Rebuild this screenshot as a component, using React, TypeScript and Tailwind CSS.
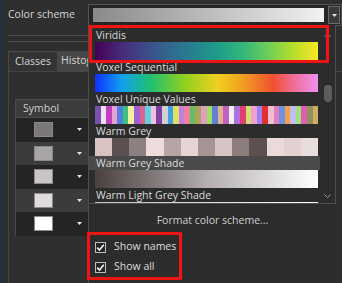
const font = { fontFamily: '"Open Sans", "Noto Sans", sans-serif' };

const voxelStripes = [
  "#7a4fb0", "#f0e0f0", "#c040c0", "#e8a0d0", "#5080e0", "#40c080", "#f0f0a0", "#a060d0",
  "#e06090", "#60d0e0", "#f0c0e0", "#8040a0", "#d0d0d0", "#40a0e0", "#e0e060", "#c080e0",
  "#f080a0", "#60c060", "#b0a060", "#e0a0c0", "#a0e060", "#6080d0", "#e0b090", "#c060c0",
  "#f0f0f0", "#b070e0", "#e04070", "#d0e070", "#f0a0d0", "#a080f0", "#e03030", "#f0c0d0",
  "#e080c0", "#7090e0", "#f0a050", "#c0c0f0", "#a0e080", "#e060b0", "#909060", "#d0b060",
];

const warmGrey = [
  "#d8c2c2", "#5c5050", "#8c8080", "#ecdcdc", "#b4a4a4", "#e4d4d4", "#a49494",
  "#d4c4c4", "#8c7c7c", "#5c5050", "#eadada", "#e4d0d0", "#e8dcdc",
];

const rows = [
  { swatch: "#7d7878", dark: true },
  { swatch: "#a9a4a4", dark: false },
  { swatch: "#c9c5c5", dark: true },
  { swatch: "#e0dcdc", dark: false },
  { swatch: "#ffffff", dark: true },
];

function Caret({ className = "" }: { className?: string }) {
  return (
    <svg width="5" height="3" viewBox="0 0 5 3" className={className}>
      <path d="M0 0 L5 0 L2.5 3 Z" fill="#e6e6e6" />
    </svg>
  );
}

function Check() {
  return (
    <div className="w-[11px] h-[11px] border border-[#bdbdbd] bg-[#262626] flex items-center justify-center">
      <svg width="9" height="9" viewBox="0 0 9 9">
        <path d="M1.2 4.6 L3.5 7 L7.8 1.8" stroke="#f2f2f2" strokeWidth="1.6" fill="none" />
      </svg>
    </div>
  );
}

function SchemeItem({ label, children, active }: { label: string; children: React.ReactNode; active?: boolean }) {
  return (
    <div className="flex flex-col">
      <div className={`h-[14px] pl-[7px] text-[10.5px] leading-[14px] text-[#dcdcdc] w-[231px] ${active ? "bg-[#4a4a4a]" : ""}`}>
        {label}
      </div>
      <div className="h-[18px] ml-[6px] w-[223px] flex overflow-hidden">{children}</div>
    </div>
  );
}

export default function App() {
  return (
    <div className="relative w-[342px] h-[283px] bg-[#2f2f2f] overflow-hidden border-l-[3px] border-[#24303c]" style={font}>
      {/* Top row */}
      <div className="flex items-center h-[28px] pt-[2px]">
        <div className="w-[85px] pl-[5px] text-[10.5px] text-[#d6d6d6]">Color scheme</div>
        <div className="flex-1 h-[22px] flex items-center border border-[#555] bg-[#262626] pl-[4px]">
          <div className="w-[231px] h-[14px] bg-gradient-to-r from-[#8a8a8a] to-[#f2f2f2]" />
          <div className="ml-auto mr-[1px] w-[12px] h-[18px] border border-[#6a6a6a] bg-[#3a3a3a] flex items-center justify-center">
            <Caret />
          </div>
        </div>
      </div>

      {/* Separators */}
      <div className="mt-[7px] ml-[5px] w-[80px] border-t border-[#4a4a4a]" />
      <div className="mt-[5px] ml-[5px] w-[80px] border-t border-[#4a4a4a]" />

      {/* Tabs */}
      <div className="mt-[9px] ml-[5px] flex h-[20px] text-[10.5px] text-[#d6d6d6]">
        <div className="px-[6px] flex items-center border border-b-0 border-[#4a4a4a] bg-[#333]">Classes</div>
        <div className="pl-[3px] w-[40px] flex items-center bg-[#474747] whitespace-nowrap">Histogram</div>
      </div>

      {/* Tab content */}
      <div className="ml-[5px] h-[212px] border-l border-t border-[#454545] pl-[6px] pt-[27px]">
        <div className="border-l border-[#4a4a4a] w-[80px]">
          <div className="h-[19px] bg-[#3c3c3c] border-y border-[#4c4c4c] pl-[7px] text-[10.5px] leading-[17px] text-[#cfcfcf]">Symbol</div>
          {rows.map((r, i) => (
            <div key={i} className={`h-[23.5px] flex items-center ${r.dark ? "bg-[#242424]" : "bg-[#3b3b3b]"}`}>
              <div className="ml-[18px] w-[19px] h-[15px] border border-[#8a8a8a]" style={{ background: r.swatch }} />
              <Caret className="ml-[24px]" />
            </div>
          ))}
        </div>
      </div>

      {/* Dropdown list */}
      <div className="absolute left-[85px] top-[25px] w-[248px] h-[258px] bg-[#2c2c2c] border-l border-[#4e4e4e]">
        <div className="relative h-[179px] border-r border-b border-[#4e4e4e] overflow-hidden pt-[3px]">
          <SchemeItem label="Viridis">
            <div className="w-full h-full bg-[linear-gradient(to_right,#440154,#482878,#3e4989,#31688e,#26828e,#1f9e89,#35b779,#6ece58,#b5de2b,#fde725)]" />
          </SchemeItem>
          <SchemeItem label="Voxel Sequential">
            <div className="w-full h-full bg-[linear-gradient(to_right,#1030ff_0%,#10a0f0_12%,#20c070_25%,#90d020_40%,#f0d020_55%,#f0a020_66%,#f05030_80%,#f070a0_90%,#f090f0_100%)]" />
          </SchemeItem>
          <SchemeItem label="Voxel Unique Values">
            {voxelStripes.map((c, i) => (
              <div key={i} className="flex-1 h-full" style={{ background: c }} />
            ))}
          </SchemeItem>
          <SchemeItem label="Warm Grey">
            {warmGrey.map((c, i) => (
              <div key={i} className="flex-1 h-full" style={{ background: c }} />
            ))}
          </SchemeItem>
          <SchemeItem label="Warm Grey Shade" active>
            <div className="w-full h-full bg-gradient-to-r from-[#4a4040] via-[#b4aeae] to-[#ffffff]" />
          </SchemeItem>
          <SchemeItem label="Warm Light Grey Shade">
            <div className="w-full h-full bg-gradient-to-r from-[#c8bcbc] to-[#ffffff]" />
          </SchemeItem>

          {/* Scrollbar */}
          <div className="absolute right-[3px] top-[8px] bottom-[2px] w-[9px] flex flex-col items-center">
            <svg width="7" height="4" viewBox="0 0 7 4"><path d="M0.5 3.5 L3.5 0.5 L6.5 3.5" stroke="#8a8a8a" fill="none" /></svg>
            <div className="mt-[48px] w-[8px] h-[17px] rounded-[4px] bg-[#5e5e5e]" />
            <svg width="7" height="4" viewBox="0 0 7 4" className="mt-auto mb-[3px]"><path d="M0.5 0.5 L3.5 3.5 L6.5 0.5" stroke="#9a9a9a" fill="none" /></svg>
          </div>
        </div>

        <div className="h-[34px] flex items-center justify-center text-[10.5px] text-[#cfcfcf]">Format color scheme...</div>

        <div className="flex flex-col gap-[8px] pl-[6px] pt-[3px] text-[10.5px] text-[#dcdcdc]">
          <div className="flex items-center gap-[8px] h-[12px]"><Check />Show names</div>
          <div className="flex items-center gap-[8px] h-[12px]"><Check />Show all</div>
        </div>
      </div>

      {/* Annotation boxes */}
      <div className="absolute left-[86px] top-[25px] w-[240px] h-[38px] border-[3px] border-[#ee1414]" />
      <div className="absolute left-[84px] top-[232px] w-[95px] h-[48px] border-[3px] border-[#ee1414]" />
    </div>
  );
}
